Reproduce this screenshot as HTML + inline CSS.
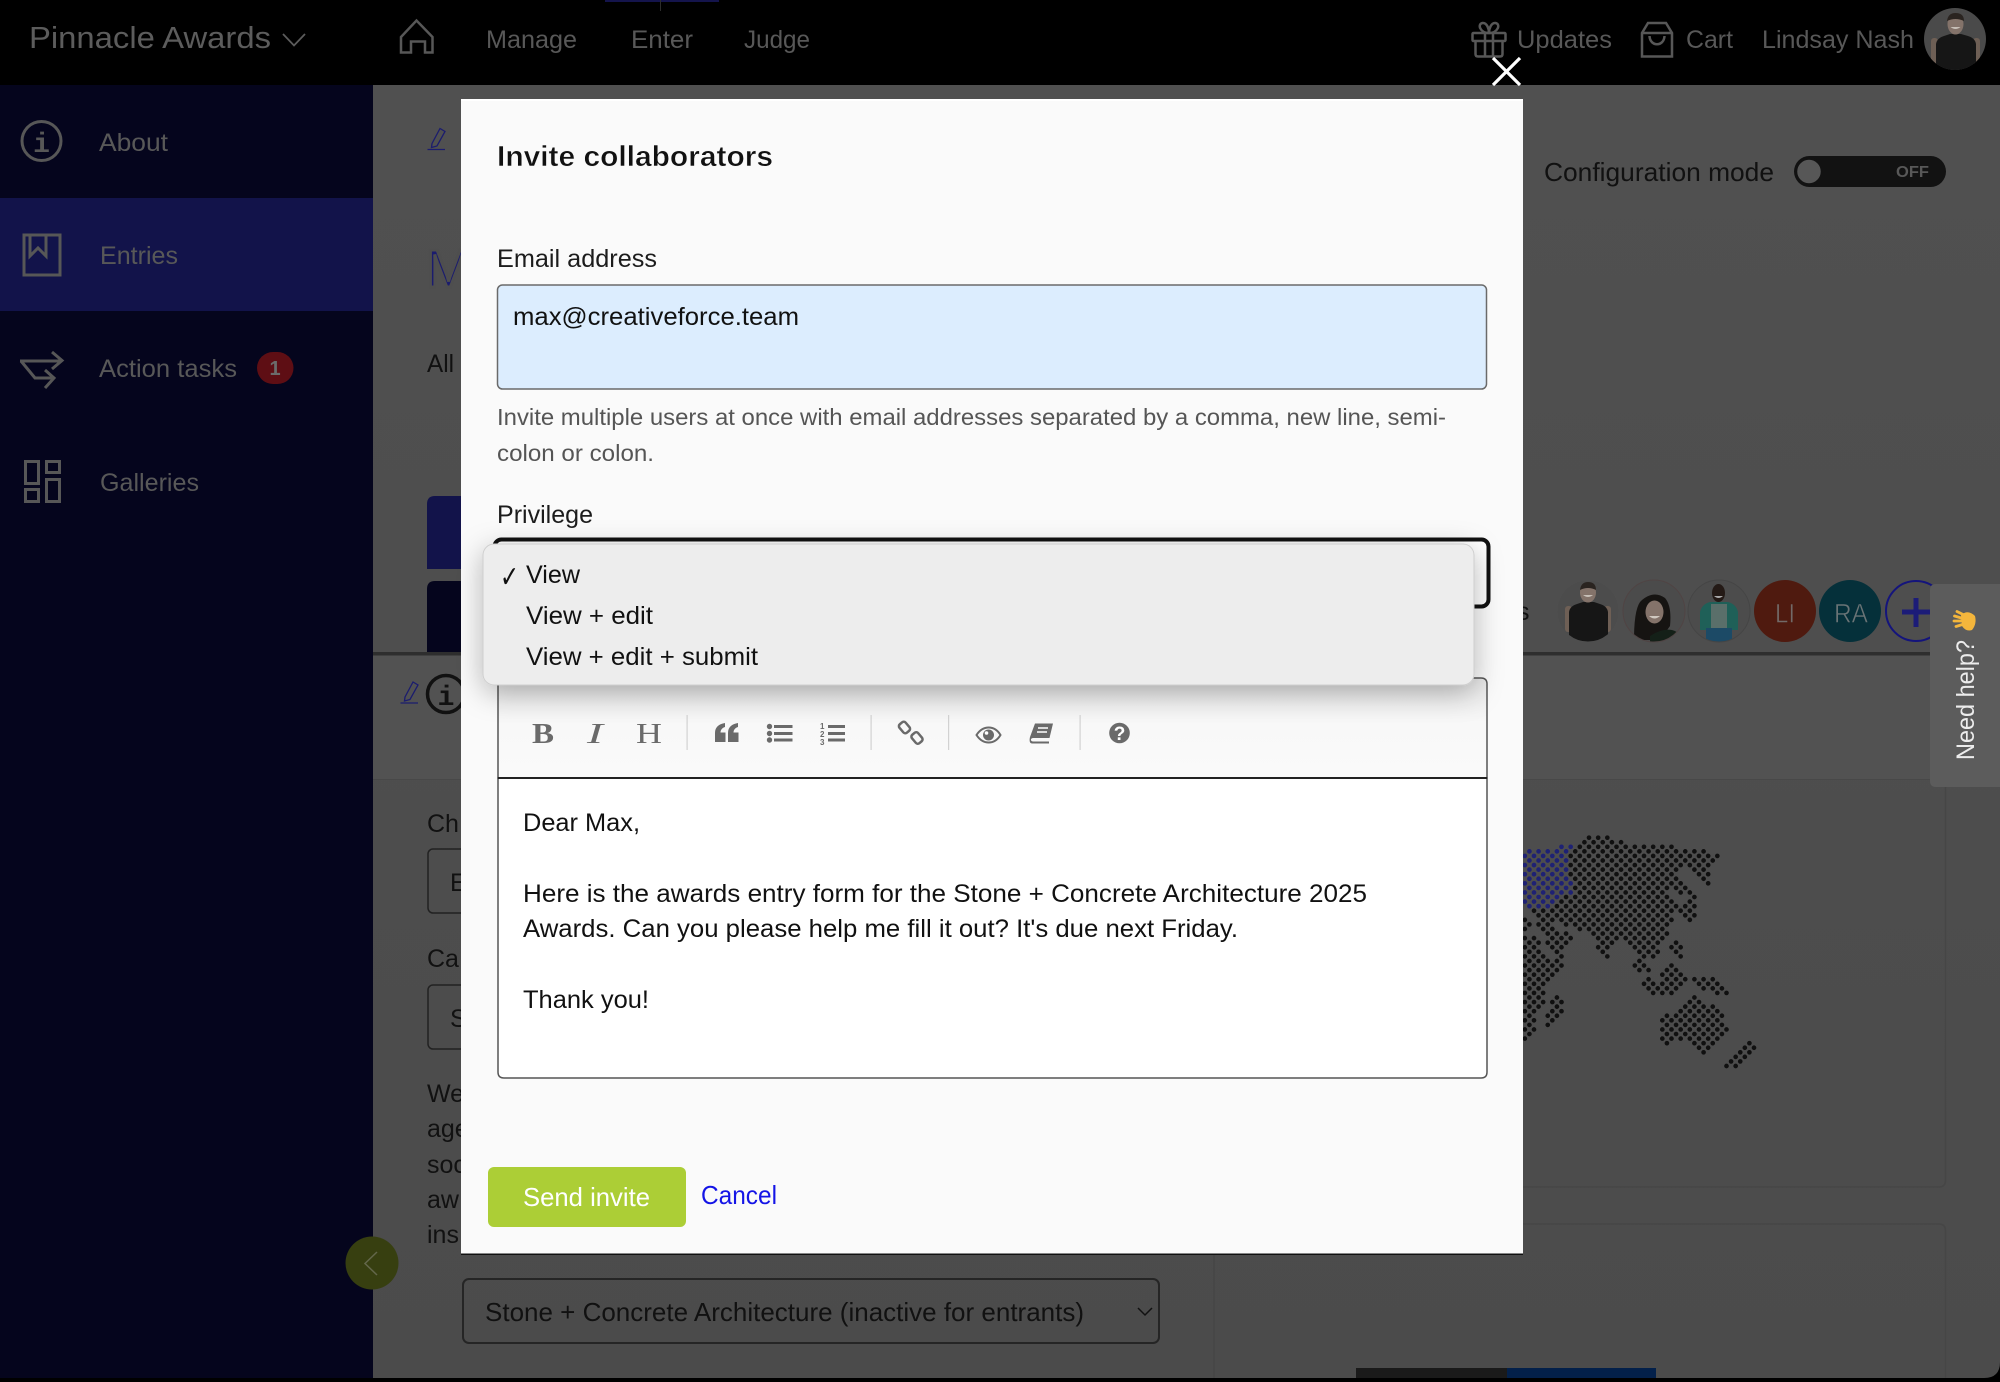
<!DOCTYPE html>
<html lang="en">
<head>
<meta charset="utf-8">
<title>Invite collaborators</title>
<style>
html,body{margin:0;padding:0;background:#000;width:2000px;height:1382px;overflow:hidden}
svg{display:block}
text{font-family:"Liberation Sans",sans-serif;white-space:pre}
.h{font-size:25px;fill:#585858}
.s{font-size:25px;fill:#585858}
.d{font-size:25px;fill:#111}
.m{font-size:25px;fill:#1c1c1c}
.ser{font-family:"Liberation Serif",serif;fill:#6a6a6a}
.ic{fill:none;stroke:#575757;stroke-width:3}
.tb{fill:#6a6a6a}
</style>
</head>
<body>
<svg width="2000" height="1382" viewBox="0 0 2000 1382" xmlns="http://www.w3.org/2000/svg">
<defs>
<clipPath id="a0"><circle cx="1955" cy="39" r="31"/></clipPath>
<clipPath id="a1"><circle cx="1588" cy="611" r="31"/></clipPath>
<clipPath id="a2"><circle cx="1654" cy="611" r="31"/></clipPath>
<clipPath id="a3"><circle cx="1719" cy="611" r="31"/></clipPath>
<linearGradient id="bg" x1="0" y1="0" x2="0" y2="1"><stop offset="0" stop-color="#505050"/><stop offset="1" stop-color="#4b4b4b"/></linearGradient>
<linearGradient id="tg" x1="0" y1="0" x2="0" y2="1"><stop offset="0" stop-color="#e6e6e6"/><stop offset=".45" stop-color="#f8f8f8"/><stop offset="1" stop-color="#fafafa"/></linearGradient>
<filter id="sh" x="-10%" y="-30%" width="120%" height="170%"><feDropShadow dx="0" dy="7" stdDeviation="14" flood-color="#000" flood-opacity=".28"/></filter>
</defs>

<!-- page base -->
<rect width="2000" height="1382" fill="#000"/>
<path d="M373 85H2000V1362Q2000 1378 1984 1378H373Z" fill="url(#bg)"/>
<rect x="373" y="655" width="1627" height="124" fill="#525252"/>
<rect x="373" y="779" width="1627" height="1" fill="#484848"/>

<!-- sidebar -->
<rect x="0" y="85" width="373" height="1293" fill="#05051d"/>
<rect x="0" y="198" width="373" height="113" fill="#12134a"/>
<circle cx="41.5" cy="141" r="19.5" class="ic"/>
<text x="41.5" y="152" text-anchor="middle" style="font-family:'Liberation Mono',monospace;font-weight:bold;font-size:28px;fill:#575757">i</text>
<text class="s" x="99" y="151" textLength="69" lengthAdjust="spacingAndGlyphs">About</text>
<rect x="24" y="235" width="36" height="40" class="ic"/>
<path d="M30 235V256L38 248L46 256V235" class="ic"/>
<text class="s" x="100" y="264" textLength="78" lengthAdjust="spacingAndGlyphs">Entries</text>
<path d="M20 361H61M52 352L62 360.500L52 369M21 361L35 378H53M45 370L54 378L45 388" class="ic"/>
<text class="s" x="99" y="377" textLength="138" lengthAdjust="spacingAndGlyphs">Action tasks</text>
<rect x="257" y="352" width="36.500" height="32" rx="16" fill="#5e0e14"/>
<text x="275" y="375" text-anchor="middle" style="font-size:20px;font-weight:bold;fill:#6b6b6b">1</text>
<g class="ic"><rect x="25.500" y="461.500" width="13" height="22"/><rect x="46.500" y="461.500" width="13" height="11"/><rect x="25.500" y="489.500" width="13" height="12"/><rect x="46.500" y="479.500" width="13" height="22"/></g>
<text class="s" x="100" y="491" textLength="99" lengthAdjust="spacingAndGlyphs">Galleries</text>

<!-- header -->
<rect x="605" y="0" width="114" height="2" fill="#14144c"/>
<rect x="660" y="0" width="1" height="11" fill="#2c2c2c"/>
<text x="29" y="48" textLength="242" lengthAdjust="spacingAndGlyphs" style="font-size:31px;fill:#5c5c5c">Pinnacle Awards</text>
<path d="M283 34L294 45.500L305 34" fill="none" stroke="#5c5c5c" stroke-width="1.800"/>
<path d="M401 52.500V37L416.500 20.500L432.500 37V52.500H425V41.500H411V52.500Z" fill="none" stroke="#575757" stroke-width="2.500"/>
<text class="h" x="486" y="48" textLength="91" lengthAdjust="spacingAndGlyphs">Manage</text>
<text class="h" x="631" y="48" textLength="62" lengthAdjust="spacingAndGlyphs">Enter</text>
<text class="h" x="744" y="48" textLength="66" lengthAdjust="spacingAndGlyphs">Judge</text>
<g fill="none" stroke="#575757" stroke-width="2.500">
<rect x="1472.500" y="33" width="33" height="8" rx="1"/>
<path d="M1475.500 41V54Q1475.500 56.500 1478 56.500H1500Q1502.500 56.500 1502.500 54V41M1485 33V56.500M1493 33V56.500"/>
<path d="M1489 33C1480 33 1477 24 1482.500 23C1487 22.500 1489 29 1489 33C1489 29 1491 22.500 1495.500 23C1501 24 1498 33 1489 33Z"/>
</g>
<text class="h" x="1517" y="48" textLength="95" lengthAdjust="spacingAndGlyphs">Updates</text>
<path d="M1642 33L1648 23H1666L1672 33V56.500H1642ZM1642 33H1672M1649.500 36C1650 47 1664 47 1664.500 36" fill="none" stroke="#575757" stroke-width="2.500"/>
<text class="h" x="1686" y="48" textLength="47" lengthAdjust="spacingAndGlyphs">Cart</text>
<text class="h" x="1762" y="48" textLength="152" lengthAdjust="spacingAndGlyphs">Lindsay Nash</text>
<g clip-path="url(#a0)">
<rect x="1924" y="8" width="62" height="62" fill="#4a4a4a"/>
<rect x="1931" y="38" width="7" height="26" rx="3" fill="#6e5f55"/><rect x="1973" y="38" width="7" height="26" rx="3" fill="#6e5f55"/>
<path d="M1936 70V44Q1937 38 1944 36L1950 34H1961L1968 36Q1975 38 1976 44V70Z" fill="#161616"/>
<ellipse cx="1955.500" cy="24" rx="8" ry="10.500" fill="#84736a"/>
<path d="M1947 21Q1948 13 1955.500 13Q1964 13 1964 21Q1955.500 17 1947 21Z" fill="#2a2420"/>
<path d="M1950.500 27Q1955.500 31 1960.500 27Z" fill="#c8c0b8"/>
</g>

<!-- main behind modal -->
<path d="M432 143.500L440 128.500L445 131.500L437 146L431.500 147.500ZM427.500 149.500H445" fill="none" stroke="#1b1c6e" stroke-width="1.300"/>
<text x="426" y="287" style="font-size:54px;fill:#1b1c6e;stroke:#4e4e4e;stroke-width:3">M</text>
<text class="d" x="427" y="372" textLength="27" lengthAdjust="spacingAndGlyphs">All</text>
<path d="M427 569V504Q427 496 435 496H470V569Z" fill="#12134a"/>
<path d="M427 652V589Q427 581 435 581H470V652Z" fill="#05051d"/>
<rect x="373" y="652" width="1627" height="3.500" fill="#2e2e2e"/>
<path d="M405 697L413 682L418 685L410 699.500L404.500 701ZM400.500 703H418" fill="none" stroke="#1b1c6e" stroke-width="1.300"/>
<circle cx="446" cy="694" r="18.500" fill="none" stroke="#111" stroke-width="3.500"/>
<text x="446" y="705" text-anchor="middle" style="font-family:'Liberation Mono',monospace;font-weight:bold;font-size:28px;fill:#111">i</text>
<text class="d" x="427" y="832">Ch</text>
<rect x="428" y="849" width="80" height="64" rx="5" fill="none" stroke="#222" stroke-width="1.500"/>
<text class="d" x="450" y="891">E</text>
<text class="d" x="427" y="967">Ca</text>
<rect x="428" y="985" width="80" height="64" rx="5" fill="none" stroke="#222" stroke-width="1.500"/>
<text class="d" x="450" y="1027">S</text>
<text class="d" x="427" y="1102">We</text>
<text class="d" x="427" y="1137">age</text>
<text class="d" x="427" y="1173">soc</text>
<text class="d" x="427" y="1208">aw</text>
<text class="d" x="427" y="1243">ins</text>
<circle cx="372" cy="1263" r="26.500" fill="#373f10"/>
<path d="M377 1252L365 1263.500L377 1275" fill="none" stroke="#63674a" stroke-width="1.500"/>
<rect x="463" y="1279" width="696" height="64" rx="6" fill="none" stroke="#252525" stroke-width="2"/>
<text x="485" y="1321" textLength="599" lengthAdjust="spacingAndGlyphs" style="font-size:26px;fill:#111">Stone + Concrete Architecture (inactive for entrants)</text>
<path d="M1138 1308L1145 1315L1152 1308" fill="none" stroke="#111" stroke-width="1.500"/>

<!-- right cards -->
<path d="M1214 780V1180Q1214 1187 1221 1187H1939Q1945.500 1187 1945.500 1180V780" fill="none" stroke="#464646" stroke-width="1.500"/>
<path d="M1214 1378V1231Q1214 1224 1221 1224H1939Q1945.500 1224 1945.500 1231V1378" fill="none" stroke="#464646" stroke-width="1.500"/>
<rect x="1356" y="1368" width="151" height="10" fill="#1a1a1a"/>
<rect x="1507" y="1368" width="149" height="10" fill="#03204a"/>

<!-- map -->
<g transform="translate(1523 830) scale(.33333)" fill="none" stroke-width="14" stroke-linecap="round" stroke-dasharray="0 27.5">
<path stroke="#101010" d="M198 23H254
M184.250 36.700H295.250
M170.500 50.400H446.500
M156.750 64.100H460.250M486.750 64.100H542.750
M143 77.800H584
M156.750 91.500H570.250
M143 105.200H474M500.500 105.200H556.500
M156.750 118.900H460.250M514.250 118.900H542.750
M143 132.600H446.500M528 132.600H556.500
M156.750 146.300H460.250M541.750 146.300H542.750
M170.500 160H474M555.500 160H556.500
M156.750 173.700H487.750
M170.500 187.400H419M473 187.400H501.500
M129.250 201.100H432.750M514.250 201.100H515.250
M115.500 214.800H446.500M500.500 214.800H501.500
M101.750 228.500H432.750M459.250 228.500H515.250
M33 242.200H446.500M473 242.200H501.500
M46.750 255.900H432.750M486.750 255.900H515.250
M5.500 269.600H6.500M60.500 269.600H446.500M500.500 269.600H501.500
M19.250 283.300H20.250M46.750 283.300H75.250M129.250 283.300H432.750
M5.500 297H6.500M60.500 297H89M170.500 297H419
M74.250 310.700H130.250M211.750 310.700H432.750
M5.500 324.400H34M88 324.400H144M225.500 324.400H419
M19.250 338.100H47.750M74.250 338.100H130.250M239.250 338.100H267.750M321.750 338.100H405.250M459.250 338.100H460.250
M5.500 351.800H34M88 351.800H116.500M225.500 351.800H254M335.500 351.800H391.500M445.500 351.800H474
M19.250 365.500H47.750M101.750 365.500H102.750M239.250 365.500H240.250M349.250 365.500H405.250M459.250 365.500H460.250
M5.500 379.200H61.500M115.500 379.200H116.500M253 379.200H254M363 379.200H391.500M473 379.200H474
M19.250 392.900H102.750M349.250 392.900H350.250
M5.500 406.600H116.500M335.500 406.600H364M445.500 406.600H446.500
M19.250 420.300H102.750M349.250 420.300H377.750M431.750 420.300H460.250
M5.500 434H89M418 434H474
M19.250 447.700H75.250M376.750 447.700H377.750M431.750 447.700H487.750M514.250 447.700H570.250
M5.500 461.400H61.500M363 461.400H391.500M418 461.400H474M528 461.400H584
M19.250 475.100H47.750M376.750 475.100H405.250M431.750 475.100H460.250M541.750 475.100H597.750
M5.500 488.800H61.500M390.500 488.800H446.500M583 488.800H611.500
M19.250 502.500H47.750M101.750 502.500H102.750M514.250 502.500H515.250
M5.500 516.200H61.500M88 516.200H116.500M500.500 516.200H529
M19.250 529.900H47.750M101.750 529.900H102.750M486.750 529.900H570.250
M5.500 543.600H34M88 543.600H116.500M473 543.600H584
M19.250 557.300H20.250M74.250 557.300H102.750M431.750 557.300H597.750
M5.500 571H34M88 571H89M418 571H584
M19.250 584.700H20.250M74.250 584.700H75.250M431.750 584.700H597.750
M5.500 598.400H34M418 598.400H611.500
M19.250 612.100H20.250M431.750 612.100H597.750
M5.500 625.800H6.500M418 625.800H584
M431.750 639.500H432.750M514.250 639.500H570.250M679.250 639.500H680.250
M528 653.200H556.500M665.500 653.200H694
M541.750 666.900H542.750M651.750 666.900H680.250
M638 680.600H666.500
M624.250 694.300H652.750
M610.500 708H639"/>
<path stroke="#1e2174" d="M115.500 50.400H144
M19.250 64.100H130.250
M5.500 77.800H116.500
M19.250 91.500H130.250
M5.500 105.200H116.500
M19.250 118.900H130.250
M5.500 132.600H116.500
M19.250 146.300H130.250
M5.500 160H144
M19.250 173.700H130.250
M5.500 187.400H144
M19.250 201.100H102.750
M5.500 214.800H89
M19.250 228.500H75.250"/>
</g>

<!-- configuration toggle -->
<text x="1544" y="181" textLength="230" lengthAdjust="spacingAndGlyphs" style="font-size:26px;fill:#111">Configuration mode</text>
<rect x="1794" y="156" width="152" height="31" rx="15.500" fill="#121212"/>
<circle cx="1809" cy="171.500" r="13" fill="#575757" stroke="#121212" stroke-width="2.500"/>
<text x="1896" y="177" textLength="33" lengthAdjust="spacingAndGlyphs" style="font-size:16px;font-weight:bold;fill:#585858">OFF</text>

<!-- collaborators -->
<text class="d" x="1517" y="620" style="font-size:25px">s</text>
<g clip-path="url(#a1)">
<rect x="1557" y="580" width="62" height="62" fill="#4c4c4c"/>
<rect x="1565" y="606" width="7" height="26" rx="3" fill="#6e5f55"/><rect x="1604" y="606" width="7" height="26" rx="3" fill="#6e5f55"/>
<path d="M1569 642V612Q1570 606 1577 604L1583 602H1594L1600 604Q1607 606 1608 612V642Z" fill="#161616"/>
<ellipse cx="1588" cy="592.500" rx="8" ry="10" fill="#84736a"/>
<path d="M1580 590Q1581 582 1588 582Q1596 582 1596 590Q1588 586 1580 590Z" fill="#2a2420"/>
<path d="M1583 595Q1588 599 1593 595Z" fill="#c8c0b8"/>
</g>
<circle cx="1588" cy="611" r="31" fill="none" stroke="#4f4f4f"/>
<g clip-path="url(#a2)">
<rect x="1623" y="580" width="62" height="62" fill="#4b4b4b"/>
<path d="M1634 640Q1634 606 1642 600Q1654 590 1665 598Q1672 606 1670 626L1660 640Z" fill="#161412"/>
<path d="M1650 636Q1662 628 1672 630Q1680 632 1686 642H1650Z" fill="#142018"/>
<ellipse cx="1654.500" cy="612" rx="9" ry="11.500" fill="#84736a"/>
<path d="M1649 616Q1654.500 621 1660 616Z" fill="#d0c8c0"/>
</g>
<circle cx="1654" cy="611" r="31" fill="none" stroke="#504444"/>
<g clip-path="url(#a3)">
<rect x="1688" y="580" width="62" height="62" fill="#4c4c4c"/>
<path d="M1700 630V612Q1702 604 1710 602H1728Q1736 604 1738 612V630H1732V642H1706V630Z" fill="#1f6058"/>
<path d="M1711 604H1727V636H1711Z" fill="#5a6f6a"/>
<path d="M1706 628H1732V642H1706Z" fill="#1c4a66"/>
<ellipse cx="1718.500" cy="593" rx="6.500" ry="9" fill="#241a16"/>
<path d="M1714 596Q1718.500 600 1723 596Z" fill="#aaa"/>
</g>
<circle cx="1719" cy="611" r="31" fill="none" stroke="#454545"/>
<circle cx="1785" cy="611" r="31" fill="#4f1a0f"/>
<text x="1775" y="622.500" textLength="20" lengthAdjust="spacingAndGlyphs" style="font-size:27px;fill:#726a68;stroke:#4f1a0f;stroke-width:.6">LI</text>
<circle cx="1850" cy="611" r="31" fill="#05303a"/>
<text x="1834" y="622.500" textLength="34" lengthAdjust="spacingAndGlyphs" style="font-size:27px;fill:#6a7476;stroke:#05303a;stroke-width:.6">RA</text>
<circle cx="1916" cy="611" r="30" fill="none" stroke="#14147c" stroke-width="2"/>
<path d="M1902 612H1932M1916 598V627" fill="none" stroke="#1c1c78" stroke-width="5"/>

<!-- need help -->
<path d="M2000 584H1936Q1930 584 1930 590V781Q1930 787 1936 787H2000Z" fill="#5c5c5c"/>
<text transform="translate(1974 760) rotate(-90)" textLength="120" lengthAdjust="spacingAndGlyphs" style="font-size:25px;fill:#ececec">Need help?</text>
<g fill="none" stroke="#f4b63c" stroke-width="2.800" stroke-linecap="round">
<path d="M1966 616L1957 611.500M1963 618.500L1954.500 616M1963 621L1954 621M1964 624L1956 626.500"/>
</g>
<path d="M1961 615Q1968 609 1975 616Q1977 624 1972 630Q1966 632 1962 626Z" fill="#f4b63c"/>

<!-- modal -->
<rect x="461" y="99" width="1062" height="1156" fill="#fafafa"/>
<rect x="461" y="99" width="1062" height="2" fill="#fff"/>
<rect x="461" y="1253.500" width="1062" height="1.500" fill="#111"/>
<text x="497" y="166" textLength="276" lengthAdjust="spacingAndGlyphs" style="font-size:29px;font-weight:bold;fill:#111;stroke:#fafafa;stroke-width:.5">Invite collaborators</text>
<text class="m" x="497" y="267" textLength="160" lengthAdjust="spacingAndGlyphs">Email address</text>
<rect x="497.500" y="285" width="989" height="104" rx="5" fill="#dcedfe" stroke="#6a6a6a" stroke-width="1.500"/>
<text class="d" x="513" y="325" textLength="286" lengthAdjust="spacingAndGlyphs">max@creativeforce.team</text>
<text x="497" y="425" textLength="949" lengthAdjust="spacingAndGlyphs" style="font-size:23.500px;fill:#555">Invite multiple users at once with email addresses separated by a comma, new line, semi-</text>
<text x="497" y="461" textLength="157" lengthAdjust="spacingAndGlyphs" style="font-size:23.500px;fill:#555">colon or colon.</text>
<text class="m" x="497" y="523" textLength="96" lengthAdjust="spacingAndGlyphs">Privilege</text>
<rect x="494.500" y="539.500" width="994" height="67" rx="7" fill="#fff" stroke="#111" stroke-width="4"/>

<!-- editor -->
<path d="M498 778V684Q498 678 504 678H1481Q1487 678 1487 684V778Z" fill="url(#tg)" stroke="#555" stroke-width="1.500"/>
<path d="M498 778H1487V1072Q1487 1078 1481 1078H504Q498 1078 498 1072Z" fill="#fff" stroke="#555" stroke-width="1.500"/>
<rect x="498" y="777" width="989" height="2" fill="#222"/>
<text class="ser" x="532" y="743" textLength="22" lengthAdjust="spacingAndGlyphs" style="font-size:29px;font-weight:bold">B</text>
<text class="ser" x="587" y="743" textLength="16" lengthAdjust="spacingAndGlyphs" style="font-size:29px;font-style:italic">I</text>
<text class="ser" x="636" y="743" textLength="26" lengthAdjust="spacingAndGlyphs" style="font-size:29px">H</text>
<g fill="#d2d2d2">
<rect x="686.500" y="715" width="1.200" height="35"/><rect x="870.500" y="715" width="1.200" height="35"/><rect x="948" y="715" width="1.200" height="35"/><rect x="1079.500" y="715" width="1.200" height="35"/>
</g>
<g class="tb">
<path d="M715 733C715 727 719 724 725 723V727C722 728 720.500 730 720.500 732.500H725.500V742H715Z"/>
<path d="M728 733C728 727 732 724 738 723V727C735 728 733.500 730 733.500 732.500H738.500V742H728Z"/>
<circle cx="769.500" cy="726.500" r="2.700"/><circle cx="769.500" cy="733.500" r="2.700"/><circle cx="769.500" cy="740" r="2.700"/>
<rect x="774" y="725" width="18.500" height="3"/><rect x="774" y="732" width="18.500" height="3"/><rect x="774" y="738.500" width="18.500" height="3"/>
<rect x="828" y="725" width="17" height="3"/><rect x="828" y="732" width="17" height="3"/><rect x="828" y="738.500" width="17" height="3"/>
</g>
<text x="820" y="729" style="font-size:8px;font-weight:bold;fill:#6a6a6a">1</text>
<text x="820" y="737" style="font-size:8px;font-weight:bold;fill:#6a6a6a">2</text>
<text x="820" y="745" style="font-size:8px;font-weight:bold;fill:#6a6a6a">3</text>
<g fill="none" stroke="#6a6a6a" stroke-width="2.500">
<rect x="-4" y="-5.500" width="8" height="11" rx="2.500" transform="translate(904.500 727.500) rotate(-40)"/>
<rect x="-4" y="-5.500" width="8" height="11" rx="2.500" transform="translate(917 738) rotate(-40)"/>
<path d="M976.500 735C983 725 994.500 725 1000.500 735C994.500 745 983 745 976.500 735Z" stroke-width="2"/>
</g>
<circle cx="988.500" cy="735" r="5.500" fill="#6a6a6a"/><circle cx="986.500" cy="733" r="1.800" fill="#fff"/>
<path d="M1035 723.500H1053L1049.500 738H1033.500C1030 738 1030 741.500 1033.500 741.500H1049V743.500H1032C1029 743.500 1029.500 739 1030 737Z" fill="#6a6a6a"/>
<path d="M1038 728H1048M1037 732H1047" stroke="#fff" stroke-width="1.400"/>
<circle cx="1119.500" cy="733" r="10.300" fill="#6a6a6a"/>
<text x="1119.500" y="740" text-anchor="middle" style="font-size:19px;font-weight:bold;fill:#fff">?</text>

<text class="d" x="523" y="831" textLength="117" lengthAdjust="spacingAndGlyphs">Dear Max,</text>
<text class="d" x="523" y="902" textLength="844" lengthAdjust="spacingAndGlyphs">Here is the awards entry form for the Stone + Concrete Architecture 2025</text>
<text class="d" x="523" y="937" textLength="715" lengthAdjust="spacingAndGlyphs">Awards. Can you please help me fill it out? It's due next Friday.</text>
<text class="d" x="523" y="1008" textLength="126" lengthAdjust="spacingAndGlyphs">Thank you!</text>

<!-- dropdown -->
<rect x="483" y="544" width="991" height="141" rx="11" fill="#ededed" stroke="#cfcfcf" filter="url(#sh)"/>
<text x="500" y="587" style="font-family:'DejaVu Sans',sans-serif;font-size:30px;fill:#111;font-weight:bold" textLength="19" lengthAdjust="spacingAndGlyphs">✓</text>
<text class="d" x="526" y="583" textLength="54" lengthAdjust="spacingAndGlyphs">View</text>
<text class="d" x="526" y="624" textLength="127" lengthAdjust="spacingAndGlyphs">View + edit</text>
<text class="d" x="526" y="665" textLength="232" lengthAdjust="spacingAndGlyphs">View + edit + submit</text>

<!-- buttons -->
<rect x="488" y="1167" width="198" height="60" rx="6" fill="#acce36"/>
<text x="523" y="1206" textLength="127" lengthAdjust="spacingAndGlyphs" style="font-size:26px;fill:#fff">Send invite</text>
<text x="701" y="1204" textLength="76" lengthAdjust="spacingAndGlyphs" style="font-size:26px;fill:#1414e6">Cancel</text>

<!-- close -->
<path d="M1493 58L1520 85M1520 58L1493 85" stroke="#fff" stroke-width="3.200" fill="none"/>
</svg>
</body>
</html>
